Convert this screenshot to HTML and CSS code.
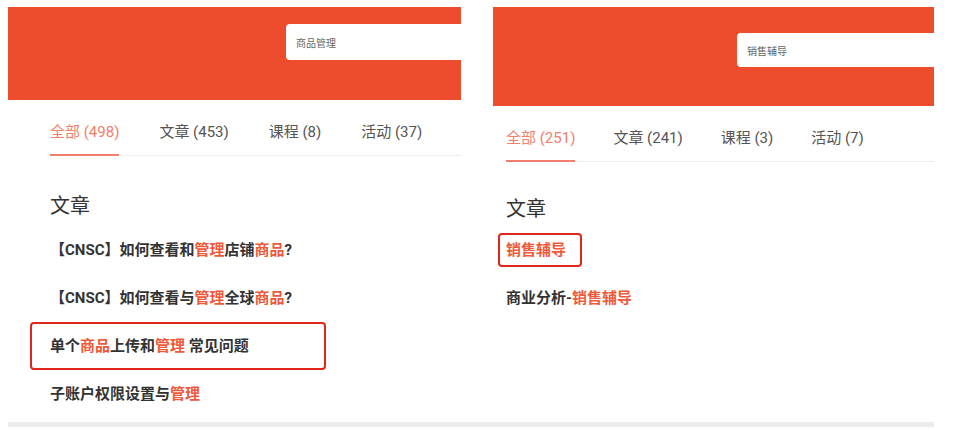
FILE: index.html
```html
<!DOCTYPE html>
<html>
    <head>
        <meta charset="utf-8">
        <title>搜索结果</title>
        <link rel="stylesheet" href="styles.css">
    </head>
    <body>
        <div id="panels">
            <div class="panel panel-left">
                <div class="header">
                    <div class="search">商品管理</div>
                </div>
                <div class="content">
                    <div class="tabs">
                        <span class="tab active">全部 (498)</span>
                        <span class="tab">文章 (453)</span>
                        <span class="tab">课程 (8)</span>
                        <span class="tab">活动 (37)</span>
                    </div>
                    <h2>文章</h2>
                    <div class="item">【CNSC】如何查看和<em>管理</em>店铺<em>商品</em>?</div>
                    <div class="item">【CNSC】如何查看与<em>管理</em>全球<em>商品</em>?</div>
                    <div class="item boxed">单个<em>商品</em>上传和<em>管理</em> 常见问题</div>
                    <div class="item">子账户权限设置与<em>管理</em></div>
                </div>
            </div>
            <div class="panel panel-right">
                <div class="header">
                    <div class="search">销售辅导</div>
                </div>
                <div class="content">
                    <div class="tabs">
                        <span class="tab active">全部 (251)</span>
                        <span class="tab">文章 (241)</span>
                        <span class="tab">课程 (3)</span>
                        <span class="tab">活动 (7)</span>
                    </div>
                    <h2>文章</h2>
                    <div class="item"><span class="mark-box"><em>销售辅导</em></span></div>
                    <div class="item">商业分析-<em>销售辅导</em></div>
                </div>
            </div>
        </div>
        <div id="bottombar"></div>
    </body>
</html>
```
FILE: styles.css
```css
html, body {
    height: 100%;
}
body {
    background-color: white;
    margin: 0;
    padding: 7px 8px 0 8px;
    font-family: Roboto, "Noto Sans CJK SC", sans-serif;
    color: #333;
    overflow: hidden;
}

#panels {
    display: flex;
    gap: 32px;
    height: 410px;
    margin-bottom: 5px;
}

.panel-left {
    width: 453px;
}
.panel-right {
    width: 441px;
}

.header {
    background-color: #ee4d2d;
    display: flex;
    justify-content: flex-end;
    align-items: flex-start;
    box-sizing: border-box;
}
.panel-left .header {
    height: 93px;
    padding-top: 17px;
}
.panel-right .header {
    height: 99px;
    padding-top: 26px;
}

.search {
    background-color: white;
    border-radius: 4px 0 0 4px;
    font-size: 10px;
    color: #666;
    padding-left: 10px;
    box-sizing: border-box;
    display: flex;
    align-items: center;
}
.panel-left .search {
    width: 175px;
    height: 36px;
}
.panel-right .search {
    width: 197px;
    height: 34px;
}

.panel-left .content {
    padding-left: 42px;
}
.panel-right .content {
    padding-left: 13px;
}

.tabs {
    display: flex;
    margin-top: 22px;
    border-bottom: 1px solid #eee;
}
.tab {
    font-size: 15px;
    line-height: 20px;
    color: #555;
    white-space: nowrap;
    flex-shrink: 0;
    padding-bottom: 12px;
    margin-bottom: -1px;
    border-bottom: 2px solid transparent;
}
.panel-left .tab {
    margin-right: 40px;
}
.panel-right .tab {
    margin-right: 38px;
}
.tabs .tab:last-child {
    margin-right: 0;
}
.tab.active {
    color: #f0806a;
    border-bottom-color: #f0806a;
}

h2 {
    font-size: 20px;
    font-weight: normal;
    line-height: 28px;
    color: #333;
}
.panel-left h2 {
    margin: 36px 0 6px 0;
}
.panel-right h2 {
    margin: 33px 0 3px 0;
}

.item {
    font-size: 15px;
    font-weight: 700;
    line-height: 20px;
    padding: 14px 0;
    color: #333;
}
.item em {
    font-style: normal;
    color: #ef5a3c;
}
.item.boxed {
    border: 2px solid #e0261b;
    border-radius: 4px;
    margin-left: -20px;
    padding: 12px 0 12px 18px;
    width: 296px;
    box-sizing: border-box;
}
.mark-box {
    display: inline-block;
    border: 2px solid #e0261b;
    border-radius: 4px;
    padding: 5px 14px 5px 6px;
    margin: -7px 0 -7px -8px;
}

#bottombar {
    width: 926px;
    height: 5px;
    background-color: #ececec;
}
```
